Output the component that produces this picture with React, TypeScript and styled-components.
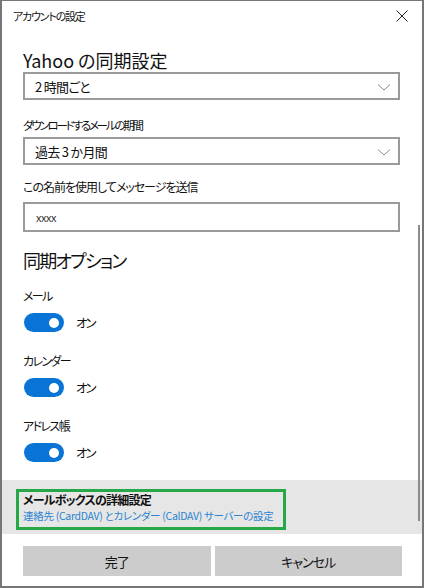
import React from 'react';
import styled, {createGlobalStyle} from "styled-components";

const GlobalStyle = createGlobalStyle`
  html, body {
    margin: 0;
    padding: 0;
    background: #ffffff;
  }
  * {
    box-sizing: border-box;
  }
`

type SyncOptionType = {
    label: string;
    on: boolean;
}

const syncOptions: SyncOptionType[] = [
    {label: "メール", on: true},
    {label: "カレンダー", on: true},
    {label: "アドレス帳", on: true},
]

const Chevron = () => (
    <svg width="14" height="8" viewBox="0 0 14 8">
        <polyline points="1,1.5 7,7 13,1.5" fill="none" stroke="#8a8a8a" strokeWidth="1"/>
    </svg>
)

const CloseIcon = () => (
    <svg width="12" height="12" viewBox="0 0 12 12">
        <path d="M0.5 0.5 L11.5 11.5 M11.5 0.5 L0.5 11.5" stroke="#222" strokeWidth="1"/>
    </svg>
)

export default function App() {
    return (
        <>
            <GlobalStyle/>
            <Window>
                <TitleBar>
                    <Title>アカウントの設定</Title>
                    <CloseButton><CloseIcon/></CloseButton>
                </TitleBar>
                <Body>
                    <Heading $top={16}>Yahoo の同期設定</Heading>
                    <Select>
                        <span>2 時間ごと</span>
                        <Chevron/>
                    </Select>
                    <Label $top={15} $size={11.5} $tracking={-2.2}>ダウンロードするメールの期間</Label>
                    <Select $top={2}>
                        <span>過去 3 か月間</span>
                        <Chevron/>
                    </Select>
                    <Label $top={12}>この名前を使用してメッセージを送信</Label>
                    <Input>xxxx</Input>
                    <Heading $top={16} $tracking={-1.8}>同期オプション</Heading>
                    <Options>
                        {syncOptions.map(o => (
                            <Option key={o.label}>
                                <Label $tracking={-1.6}>{o.label}</Label>
                                <ToggleRow>
                                    <Toggle $on={o.on}/>
                                    <ToggleText>{o.on ? "オン" : "オフ"}</ToggleText>
                                </ToggleRow>
                            </Option>
                        ))}
                    </Options>
                </Body>
                <Advanced>
                    <AdvancedBox>
                        <AdvancedTitle>メールボックスの詳細設定</AdvancedTitle>
                        <AdvancedLink href="#">連絡先 (CardDAV) とカレンダー (CalDAV) サーバーの設定</AdvancedLink>
                    </AdvancedBox>
                </Advanced>
                <Buttons>
                    <Button>完了</Button>
                    <Button>キャンセル</Button>
                </Buttons>
                <ScrollThumb/>
            </Window>
        </>
    );
}

const Window = styled.div`
  position: relative;
  width: 424px;
  height: 588px;
  display: flex;
  flex-direction: column;
  background: #ffffff;
  border-style: solid;
  border-color: #767676;
  border-width: 1px 2px 2px 2px;
  font-family: "Noto Sans CJK JP", "Noto Sans", sans-serif;
  font-feature-settings: "palt";
  color: #111;
  overflow: hidden;
`

const TitleBar = styled.div`
  height: 31px;
  flex-shrink: 0;
  display: flex;
  align-items: center;
  justify-content: space-between;
  padding: 0 14px 0 11px;
`

const Title = styled.div`
  font-size: 11px;
  line-height: 16px;
  letter-spacing: -1.2px;
  margin-top: -2px;
  color: #111;
`

const CloseButton = styled.div`
  display: flex;
  margin-top: -1px;
`

const Body = styled.div`
  height: 448px;
  flex-shrink: 0;
  display: flex;
  flex-direction: column;
  padding: 0 22px 0 21px;
`

const Heading = styled.div<{ $top?: number; $tracking?: number }>`
  margin-top: ${p => p.$top ?? 0}px;
  font-size: 18px;
  line-height: 24px;
  letter-spacing: ${p => p.$tracking ?? 0}px;
  color: #111;
`

const Label = styled.div<{ $top?: number; $size?: number; $tracking?: number }>`
  margin-top: ${p => p.$top ?? 0}px;
  font-size: ${p => p.$size ?? 12}px;
  line-height: 20px;
  letter-spacing: ${p => p.$tracking ?? -1}px;
  color: #111;
`

const Select = styled.div<{ $top?: number }>`
  margin-top: ${p => p.$top ?? 0}px;
  height: 28px;
  border: 2px solid #9a9a9a;
  display: flex;
  align-items: center;
  justify-content: space-between;
  padding: 0 7px 0 10px;
  font-size: 13px;
  letter-spacing: -0.7px;
  color: #111;

  svg {
    margin-top: 1px;
  }
`

const Input = styled.div`
  margin-top: 5px;
  height: 30px;
  border: 2px solid #9a9a9a;
  display: flex;
  align-items: center;
  padding: 0 11px;
  font-size: 11px;
  letter-spacing: -0.5px;
  color: #333;
`

const Options = styled.div`
  margin-top: 14px;
  display: flex;
  flex-direction: column;
  gap: 19px;
`

const Option = styled.div`
  display: flex;
  flex-direction: column;
  gap: 7px;
`

const ToggleRow = styled.div`
  display: flex;
  align-items: center;
  gap: 12px;
  padding-left: 1px;
`

const Toggle = styled.div<{ $on: boolean }>`
  position: relative;
  width: 40px;
  height: 19px;
  border-radius: 10px;
  background: ${p => p.$on ? "#0a74d6" : "#ffffff"};
  border: ${p => p.$on ? "none" : "2px solid #333"};

  &::after {
    content: "";
    position: absolute;
    top: 4.5px;
    ${p => p.$on ? "right: 5px;" : "left: 5px;"}
    width: 10px;
    height: 10px;
    border-radius: 50%;
    background: ${p => p.$on ? "#ffffff" : "#333"};
  }
`

const ToggleText = styled.span`
  font-size: 12.5px;
  letter-spacing: -2px;
  color: #111;
`

const Advanced = styled.div`
  height: 54px;
  flex-shrink: 0;
  background: #e6e6e6;
  padding: 9px 0 0 14px;
`

const AdvancedBox = styled.div`
  width: 270px;
  height: 41px;
  border: 3px solid #25a845;
  padding: 0 0 0 4px;
  display: flex;
  flex-direction: column;
`

const AdvancedTitle = styled.div`
  font-size: 12px;
  font-weight: 700;
  line-height: 15px;
  letter-spacing: -0.8px;
  color: #111;
`

const AdvancedLink = styled.a`
  font-size: 10.5px;
  line-height: 17px;
  letter-spacing: -0.3px;
  color: #2b84cf;
  text-decoration: none;
  white-space: nowrap;
`

const Buttons = styled.div`
  flex: 1;
  display: flex;
  gap: 4px;
  padding: 12px 20px 0 21px;
`

const Button = styled.div`
  flex: 1;
  height: 30px;
  background: #cccccc;
  display: flex;
  align-items: center;
  justify-content: center;
  font-size: 13px;
  letter-spacing: -1px;
  color: #111;
`

const ScrollThumb = styled.div`
  position: absolute;
  right: 2px;
  top: 224px;
  width: 2px;
  height: 296px;
  background: #8c8c8c;
`
